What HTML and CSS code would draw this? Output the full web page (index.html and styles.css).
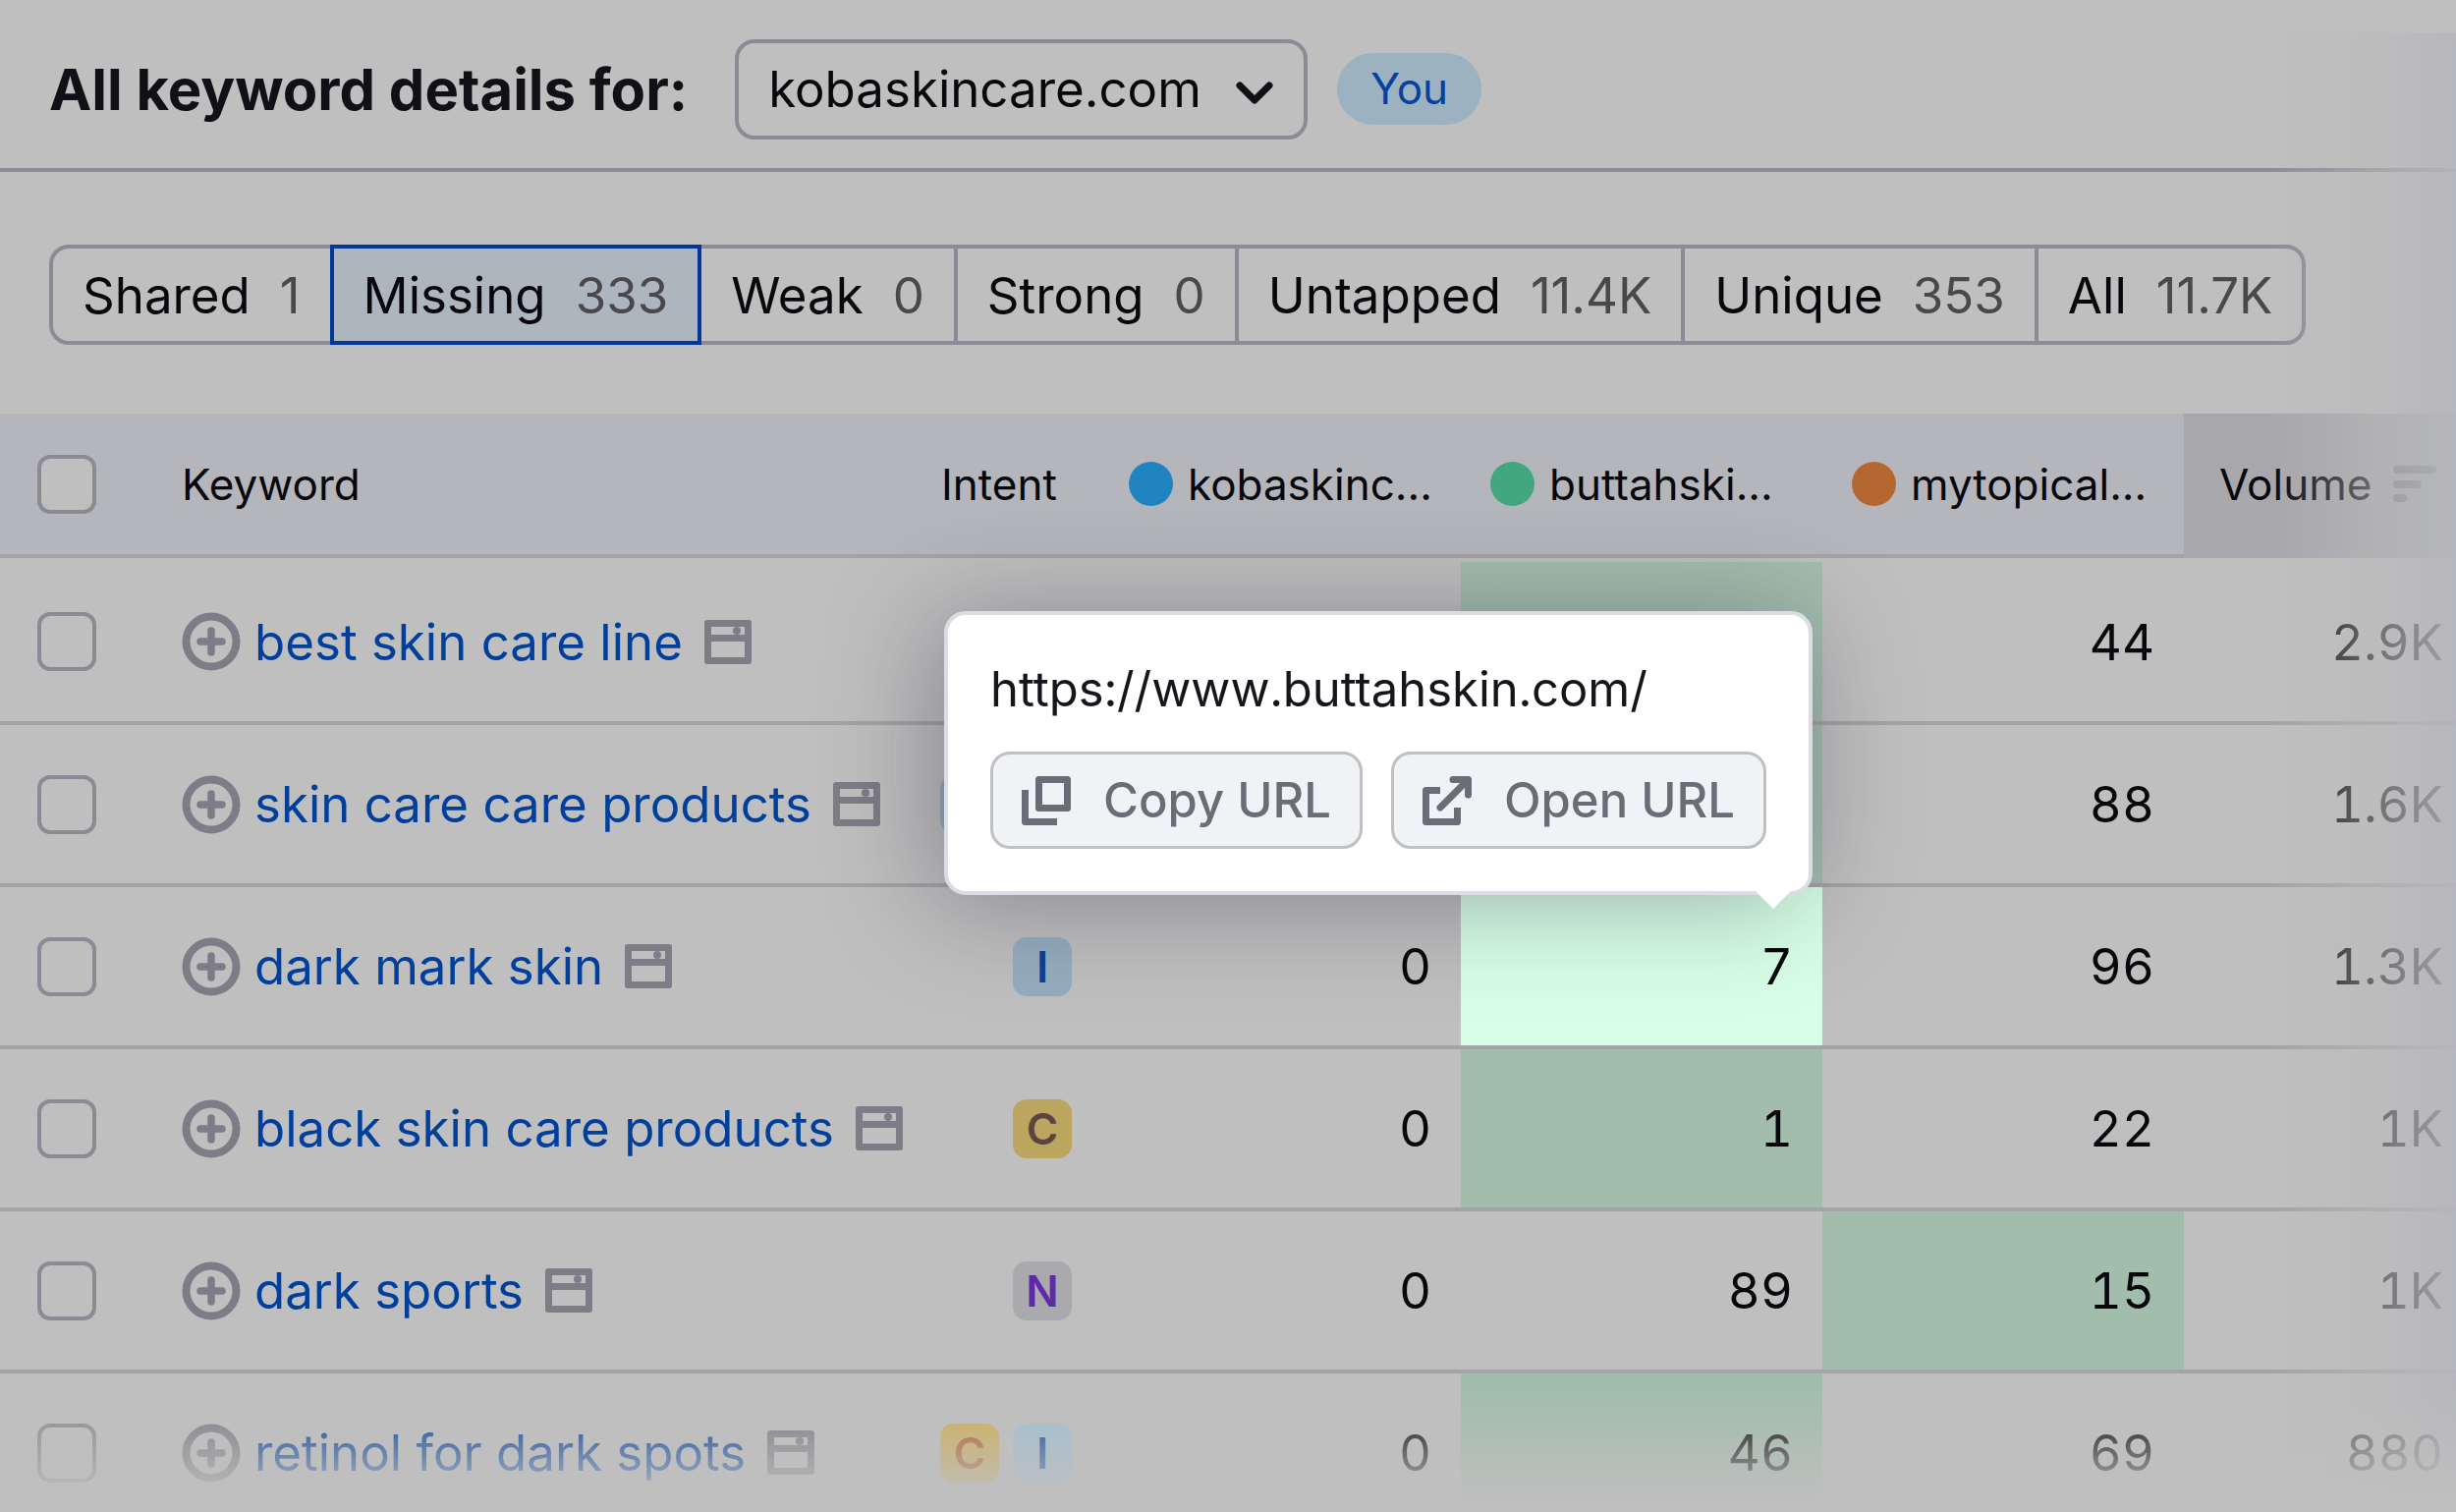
FILE: index.html
```html
<!DOCTYPE html>
<html lang="en">
<head>
    <meta charset="utf-8">
    <title>All keyword details</title>
    <link rel="stylesheet" href="styles.css">
</head>
<body>
    <svg class="sprite" aria-hidden="true">
        <symbol id="icon-plus" viewBox="0 0 60 60">
            <circle cx="30" cy="30" r="25.500" fill="none" stroke="currentColor" stroke-width="8"/>
            <path d="M30 19v22M19 30h22" fill="none" stroke="currentColor" stroke-width="7.500" stroke-linecap="round"/>
        </symbol>
        <symbol id="icon-serp" viewBox="0 0 48 45">
            <path fill="currentColor" fill-rule="evenodd" d="M3 0h42a3 3 0 0 1 3 3v39a3 3 0 0 1-3 3H3a3 3 0 0 1-3-3V3a3 3 0 0 1 3-3zM7 7v8h34V7zM7 22v16h34V22z"/>
            <circle cx="33" cy="11" r="4" fill="currentColor"/>
        </symbol>
    </svg>

    <div class="header">
        <h1>All keyword details for:</h1>
        <div class="domain">
            <select id="domain" aria-label="Domain">
                <option>kobaskincare.com</option>
            </select>
            <svg class="chevron" viewBox="0 0 38 24"><path d="M4 4l15 15L34 4" fill="none" stroke="currentColor" stroke-width="7" stroke-linecap="round" stroke-linejoin="round"/></svg>
        </div>
        <span class="you">You</span>
    </div>

    <div class="tabs">
        <button>Shared <span>1</span></button>
        <button class="active">Missing <span>333</span></button>
        <button>Weak <span>0</span></button>
        <button>Strong <span>0</span></button>
        <button>Untapped <span>11.4K</span></button>
        <button>Unique <span>353</span></button>
        <button>All <span>11.7K</span></button>
    </div>

    <table class="keywords">
        <colgroup>
            <col class="col-check">
            <col>
            <col class="col-intent">
            <col class="col-site">
            <col class="col-site">
            <col class="col-site">
            <col class="col-volume">
        </colgroup>
        <thead>
            <tr>
                <th class="check"><input type="checkbox" aria-label="Select all"></th>
                <th>Keyword</th>
                <th class="intent-head">Intent</th>
                <th><div class="site"><i class="dot blue"></i>kobaskinc...</div></th>
                <th><div class="site"><i class="dot green"></i>buttahski...</div></th>
                <th><div class="site"><i class="dot orange"></i>mytopical...</div></th>
                <th class="sorted">
                    <div class="sort">Volume
                        <svg width="44" height="38" viewBox="0 0 44 38"><path d="M4 4h36M4 19h21M4 33h6" fill="none" stroke="currentColor" stroke-width="8" stroke-linecap="round"/></svg>
                    </div>
                </th>
            </tr>
        </thead>
        <tbody>
            <tr>
                <td class="check"><input type="checkbox" aria-label="best skin care line"></td>
                <td><div class="keyword"><svg class="plus"><use href="#icon-plus"/></svg><a href="#">best skin care line</a><svg class="serp"><use href="#icon-serp"/></svg></div></td>
                <td></td>
                <td class="num"></td>
                <td class="num best"></td>
                <td class="num">44</td>
                <td class="num volume">2.9K</td>
            </tr>
            <tr>
                <td class="check"><input type="checkbox" aria-label="skin care care products"></td>
                <td><div class="keyword"><svg class="plus"><use href="#icon-plus"/></svg><a href="#">skin care care products</a><svg class="serp"><use href="#icon-serp"/></svg></div></td>
                <td><div class="intent"><span class="badge info"></span><span class="badge comm"></span></div></td>
                <td class="num"></td>
                <td class="num best"></td>
                <td class="num">88</td>
                <td class="num volume">1.6K</td>
            </tr>
            <tr>
                <td class="check"><input type="checkbox" aria-label="dark mark skin"></td>
                <td><div class="keyword"><svg class="plus"><use href="#icon-plus"/></svg><a href="#">dark mark skin</a><svg class="serp"><use href="#icon-serp"/></svg></div></td>
                <td><div class="intent"><span class="badge info">I</span></div></td>
                <td class="num">0</td>
                <td class="num best current">
                    7
                    <div class="popover">
                        <p>https://www.buttahskin.com/</p>
                        <div class="actions">
                            <button>
                                <svg viewBox="0 0 50 50" fill="none" stroke="currentColor" stroke-width="7" stroke-linejoin="round"><path d="M17.500 3.500h29v29h-29zM3.500 14v32.500H36" /></svg>
                                Copy URL
                            </button>
                            <button>
                                <svg viewBox="0 0 50 50" fill="none" stroke="currentColor" stroke-width="7" stroke-linejoin="round"><path d="M18 14.500H3.500v32h32V32"/><path d="M18 32L46 4M31 3.500h15.500V19" stroke-linecap="round"/></svg>
                                Open URL
                            </button>
                        </div>
                    </div>
                </td>
                <td class="num">96</td>
                <td class="num volume">1.3K</td>
            </tr>
            <tr>
                <td class="check"><input type="checkbox" aria-label="black skin care products"></td>
                <td><div class="keyword"><svg class="plus"><use href="#icon-plus"/></svg><a href="#">black skin care products</a><svg class="serp"><use href="#icon-serp"/></svg></div></td>
                <td><div class="intent"><span class="badge comm">C</span></div></td>
                <td class="num">0</td>
                <td class="num best">1</td>
                <td class="num">22</td>
                <td class="num volume">1K</td>
            </tr>
            <tr>
                <td class="check"><input type="checkbox" aria-label="dark sports"></td>
                <td><div class="keyword"><svg class="plus"><use href="#icon-plus"/></svg><a href="#">dark sports</a><svg class="serp"><use href="#icon-serp"/></svg></div></td>
                <td><div class="intent"><span class="badge nav">N</span></div></td>
                <td class="num">0</td>
                <td class="num">89</td>
                <td class="num best">15</td>
                <td class="num volume">1K</td>
            </tr>
            <tr class="last">
                <td class="check"><input type="checkbox" aria-label="retinol for dark spots"></td>
                <td><div class="keyword"><svg class="plus"><use href="#icon-plus"/></svg><a href="#">retinol for dark spots</a><svg class="serp"><use href="#icon-serp"/></svg></div></td>
                <td><div class="intent"><span class="badge comm">C</span><span class="badge info">I</span></div></td>
                <td class="num">0</td>
                <td class="num best">46</td>
                <td class="num">69</td>
                <td class="num volume">880</td>
            </tr>
        </tbody>
    </table>

    <!-- edge fades -->
    <div class="fade-right"></div>
    <div class="fade-bottom"></div>
</body>
</html>
```
FILE: styles.css
```css
* {
    box-sizing: border-box;
}
body {
    margin: 0;
    height: 100vh;
    overflow: hidden;
    position: relative;
    background-color: #bfbfbf;
    color: #07070c;
    font-family: Inter, "Liberation Sans", sans-serif;
    font-optical-sizing: none;
    font-size: 51px;
}
button, select {
    font: inherit;
    color: inherit;
    cursor: pointer;
}
.sprite {
    display: none;
}
.header {
    display: flex;
    align-items: center;
    height: 175px;
    padding: 10px 50px 0;
    border-bottom: 4px solid #8a8b94;
}
.header h1 {
    margin: 0;
    font-size: 58px;
    font-weight: 700;
    color: #101017;
}
.domain {
    position: relative;
    margin-left: 48px;
}
.domain select {
    display: block;
    height: 102px;
    padding: 0 104px 0 30px;
    appearance: none;
    background: none;
    border: 4px solid #8a8b94;
    border-radius: 20px;
}
.chevron {
    position: absolute;
    right: 35px;
    top: 43px;
    width: 38px;
    height: 24px;
    color: #101017;
    pointer-events: none;
}
.you {
    margin-left: 30px;
    padding: 0 34px;
    font-size: 44px;
    line-height: 73px;
    border-radius: 37px;
    background-color: #9cb2c0;
    color: #07419f;
}
.tabs {
    display: flex;
    padding: 74px 50px 70px;
}
.tabs button {
    display: flex;
    align-items: center;
    gap: 30px;
    height: 102px;
    margin-left: -4px;
    padding: 0 30px;
    background: none;
    border: 4px solid #8a8b94;
}
.tabs button:first-child {
    margin-left: 0;
    border-radius: 20px 0 0 20px;
}
.tabs button:last-child {
    border-radius: 0 20px 20px 0;
}
.tabs button.active {
    position: relative;
    background-color: #adb5bf;
    border-color: #00389a;
}
.tabs span {
    color: #48484d;
}

/* table */
.keywords {
    width: 100%;
    table-layout: fixed;
    border-spacing: 0;
}
.col-check {
    width: 185px;
}
.col-intent {
    width: 192px;
}
.col-site {
    width: 368px;
}
.col-volume {
    width: 277px;
}
.keywords th {
    height: 147px;
    padding: 0;
    background-color: #b5b6bb;
    border-bottom: 4px solid #a3a3a9;
    font-size: 44px;
    font-weight: 400;
    text-align: left;
    white-space: nowrap;
}
.keywords td {
    height: 165px;
    padding: 0;
    border-bottom: 4px solid #a3a3a9;
    background-clip: padding-box;
}
.keywords tbody tr:first-child td {
    height: 170px;
    border-top: 4px solid transparent;
}
.keywords .check {
    padding-left: 38px;
}
.keywords .intent-head {
    padding-left: 31px;
}
.keywords .sorted {
    padding-left: 36px;
    background-color: #a7a7ac;
    border-color: #a7a8ae;
}
input[type="checkbox"] {
    display: block;
    appearance: none;
    width: 60px;
    height: 60px;
    margin: 0;
    border: 4px solid #8a8b94;
    border-radius: 13px;
    background-color: #bfbfbf;
}
.site, .sort, .keyword, .intent, .actions {
    display: flex;
    align-items: center;
}
.site {
    gap: 15px;
    padding-left: 30px;
}
.dot {
    width: 45px;
    height: 45px;
    border-radius: 50%;
}
.dot.blue {
    background-color: #2084c0;
}
.dot.green {
    background-color: #42a67e;
}
.dot.orange {
    background-color: #b46731;
}
.sort {
    gap: 22px;
}
.sort svg {
    color: #74757d;
}
.keyword a {
    margin: 0 22px 0 14px;
    color: #00409c;
    text-decoration: none;
    white-space: nowrap;
}
.keyword svg {
    color: #7c7d86;
    flex: none;
}
.plus {
    width: 60px;
    height: 60px;
}
.serp {
    width: 48px;
    height: 45px;
}
.intent {
    justify-content: flex-end;
    gap: 14px;
    padding-right: 28px;
}
.badge {
    width: 60px;
    height: 60px;
    border-radius: 14px;
    font-size: 44px;
    font-weight: 600;
    line-height: 60px;
    text-align: center;
}
.badge.info {
    background-color: #96adbf;
    color: #0a4499;
}
.badge.comm {
    background-color: #bba55f;
    color: #5c4440;
}
.badge.nav {
    background-color: #a9a9ae;
    color: #5f2aa8;
}
.last .badge.info {
    background-color: #a2bfd4;
}
.last .badge.comm {
    background-color: #cfae55;
    color: #b05a24;
}
.num {
    text-align: right;
    font-variant-numeric: tabular-nums;
}
.keywords .num {
    padding-right: 30px;
}
.keywords .volume {
    padding-right: 13px;
}
.best {
    background-color: #a3bdad;
}
.best.current {
    position: relative;
    background-color: #d8ffe6;
}

/* url popover */
.popover {
    position: absolute;
    right: 10px;
    bottom: calc(100% - 8px);
    padding: 46px 43px 43px;
    background-color: #fff;
    border: 4px solid #dcdde4;
    border-radius: 22px;
    box-shadow: -10px 8px 110px rgba(25, 20, 40, .34);
    font-size: 49px;
    text-align: left;
    white-space: nowrap;
}
.popover::after {
    content: "";
    position: absolute;
    right: 18px;
    bottom: -18px;
    border: 18px solid transparent;
    border-top-color: #fff;
    border-bottom: 0;
}
.popover p {
    margin: 0 0 33px;
    line-height: 60px;
    color: #15151b;
}
.actions {
    gap: 29px;
}
.actions button {
    display: flex;
    align-items: center;
    gap: 33px;
    height: 99px;
    padding: 0 29px;
    background-color: #f1f2f5;
    border: 3px solid #bfc0c2;
    border-radius: 20px;
    color: #6b6d76;
    font-weight: 500;
}
.actions svg {
    width: 50px;
    height: 50px;
}

.fade-right {
    position: absolute;
    top: 33px;
    right: 0;
    bottom: 0;
    width: 190px;
    background: linear-gradient(to right, rgba(187, 187, 188, 0), rgba(186, 186, 188, .6) 60%, rgba(182, 183, 188, .9));
    pointer-events: none;
}
.fade-bottom {
    position: absolute;
    left: 0;
    right: 0;
    bottom: 0;
    height: 120px;
    background: linear-gradient(rgba(191, 191, 191, 0), #bfbfbf 92%);
    pointer-events: none;
}
```
